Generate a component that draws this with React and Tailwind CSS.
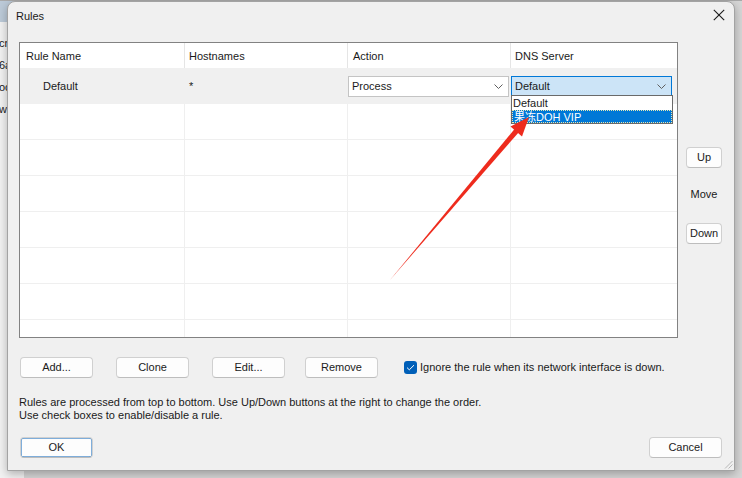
import React from "react";

const Chevron = () => (
  <svg width="9" height="5" viewBox="0 0 9 5" className="shrink-0">
    <polyline points="0.5,0.5 4.5,4.5 8.5,0.5" fill="none" stroke="#5f5f5f" strokeWidth="1" />
  </svg>
);

const Btn = ({ children, className = "" }) => (
  <div
    className={
      "h-[21px] w-[73px] flex items-center justify-center bg-[#fdfdfd] border border-[#d0d0d0] border-b-[#bdbdbd] rounded-[4px] text-[11px] text-[#1b1b1b] leading-none " +
      className
    }
  >
    {children}
  </div>
);

const SmallBtn = ({ children }) => (
  <div className="h-[21px] w-[36px] flex items-center justify-center bg-[#fdfdfd] border border-[#d0d0d0] border-b-[#bdbdbd] rounded-[4px] text-[11px] text-[#1b1b1b] leading-none">
    {children}
  </div>
);

const EmptyRow = ({ last }) => (
  <div
    className={
      "grid grid-cols-[164px_163px_163px_167px] " +
      (last ? "h-[17px]" : "h-[36px] border-b border-[#efefef]")
    }
  >
    <div />
    <div className="border-l border-[#efefef]" />
    <div className="border-l border-[#efefef]" />
    <div className="border-l border-[#efefef]" />
  </div>
);

export default function App() {
  return (
    <div className="relative w-[742px] h-[478px] overflow-hidden bg-[#d6d6d6] font-['Liberation_Sans','Noto_Sans_CJK_SC',sans-serif] text-[11px] text-[#1a1a1a]">
      {/* background window */}
      <div className="absolute left-0 top-0 w-[24px] h-[478px] bg-[#f2f2f2]">
        <div className="h-[22px] bg-[#bccad8]" />
        <div className="flex flex-col text-[11px] leading-[22px] text-[#1a1a1a] pt-[10px] -ml-[1px]">
          <span>cn</span>
          <span>6a</span>
          <span>oc</span>
          <span>w</span>
        </div>
      </div>
      <div className="absolute left-0 top-0 w-[742px] h-[1px] bg-[#a9a9a9]" />

      {/* dialog */}
      <div className="absolute left-[7px] top-[1px] w-[728px] h-[470px] bg-[#f0f0f0] border border-[#a3a3a3] rounded-t-[8px] shadow-[0_3px_10px_rgba(0,0,0,0.28)] flex flex-col">
        {/* title bar */}
        <div className="h-[40px] flex justify-between items-start">
          <div className="pl-[8px] pt-[7px] leading-[14px] text-[11px] text-[#1a1a1a]">Rules</div>
          <div className="pr-[9px] pt-[7px]">
            <svg width="12" height="12" viewBox="0 0 12 12">
              <line x1="0.8" y1="0.8" x2="11.2" y2="11.2" stroke="#1a1a1a" strokeWidth="1.1" />
              <line x1="11.2" y1="0.8" x2="0.8" y2="11.2" stroke="#1a1a1a" strokeWidth="1.1" />
            </svg>
          </div>
        </div>

        {/* main row */}
        <div className="flex">
          <div className="relative ml-[11px] w-[659px] h-[296px] border border-[#828282] bg-white">
            {/* header */}
            <div className="grid grid-cols-[164px_163px_163px_167px] h-[25px] items-center">
              <div className="h-full flex items-center pt-[2px] pl-[6px]">Rule Name</div>
              <div className="h-full flex items-center pt-[2px] border-l border-[#e5e5e5] pl-[4px]">Hostnames</div>
              <div className="h-full flex items-center pt-[2px] border-l border-[#e5e5e5] pl-[5px]">Action</div>
              <div className="h-full flex items-center pt-[2px] border-l border-[#e5e5e5] pl-[4px]">DNS Server</div>
            </div>
            {/* default row */}
            <div className="grid grid-cols-[164px_163px_163px_167px] h-[36px] bg-[#f0f0f0]">
              <div className="pl-[23px] flex items-center">Default</div>
              <div className="pl-[5px] flex items-center">*</div>
              <div className="pt-[8px] border-l border-[#f0f0f0]">
                <div className="w-[161px] h-[21px] bg-white border border-[#c4c4c4] flex items-center justify-between pl-[3px] pr-[5px]">
                  <span>Process</span>
                  <Chevron />
                </div>
              </div>
              <div className="pt-[8px] border-l border-[#f0f0f0]">
                <div className="w-[161px] h-[21px] bg-[#cce4f7] border border-[#0078d7] flex items-center justify-between pl-[3px] pr-[5px]">
                  <span>Default</span>
                  <Chevron />
                </div>
              </div>
            </div>
            <EmptyRow />
            <EmptyRow />
            <EmptyRow />
            <EmptyRow />
            <EmptyRow />
            <EmptyRow />
            <EmptyRow last />

            {/* dropdown list */}
            <div className="absolute left-[491px] top-[52px] w-[162px] h-[29px] bg-white border border-[#6a6a6a] flex flex-col">
              <div className="h-[14px] leading-[14px] pl-[1px]">Default</div>
              <div className="h-[13px] leading-[12px] pl-[1px] bg-[#0078d7] text-white border border-dotted border-[#e8e8b0]">
                果冻DOH VIP
              </div>
            </div>
          </div>

          {/* side buttons */}
          <div className="ml-[8px] flex flex-col items-center w-[36px]">
            <div className="mt-[105px]">
              <SmallBtn>Up</SmallBtn>
            </div>
            <div className="mt-[19px] leading-[14px]">Move</div>
            <div className="mt-[22px]">
              <SmallBtn>Down</SmallBtn>
            </div>
          </div>
        </div>

        {/* buttons row */}
        <div className="flex items-center mt-[19px] ml-[12px]">
          <Btn>Add...</Btn>
          <Btn className="ml-[23px]">Clone</Btn>
          <Btn className="ml-[23px]">Edit...</Btn>
          <Btn className="ml-[20px]">Remove</Btn>
          <div className="ml-[26px] w-[13px] h-[13px] rounded-[3px] bg-[#005fb8] flex items-center justify-center">
            <svg width="9" height="7" viewBox="0 0 9 7">
              <polyline points="1,3.6 3.3,5.8 8,1.2" fill="none" stroke="white" strokeWidth="1" />
            </svg>
          </div>
          <span className="ml-[3px]">Ignore the rule when its network interface is down.</span>
        </div>

        {/* info text */}
        <div className="mt-[18px] ml-[11px] leading-[13px]">
          <div>Rules are processed from top to bottom. Use Up/Down buttons at the right to change the order.</div>
          <div>Use check boxes to enable/disable a rule.</div>
        </div>

        {/* ok / cancel */}
        <div className="mt-[15px] flex justify-between pl-[12px] pr-[12px]">
          <Btn className="border-[#005fb8] shadow-[inset_0_0_0_0.5px_#005fb8]">OK</Btn>
          <Btn>Cancel</Btn>
        </div>

        {/* resize grip */}
        <svg className="absolute right-[1px] bottom-[1px]" width="9" height="9" viewBox="0 0 9 9">
          <line x1="8.5" y1="1" x2="1" y2="8.5" stroke="#b8b8b8" strokeWidth="1" />
          <line x1="8.5" y1="4.5" x2="4.5" y2="8.5" stroke="#b8b8b8" strokeWidth="1" />
        </svg>
      </div>

      {/* red annotation arrow */}
      <svg className="absolute left-0 top-0 pointer-events-none" width="742" height="478" viewBox="0 0 742 478">
        <polygon points="390,280 519,132 515,128.5" fill="#ee2b1d" />
        <polygon points="529,117 522,136.5 510.5,126.5" fill="#ee2b1d" />
      </svg>
    </div>
  );
}
